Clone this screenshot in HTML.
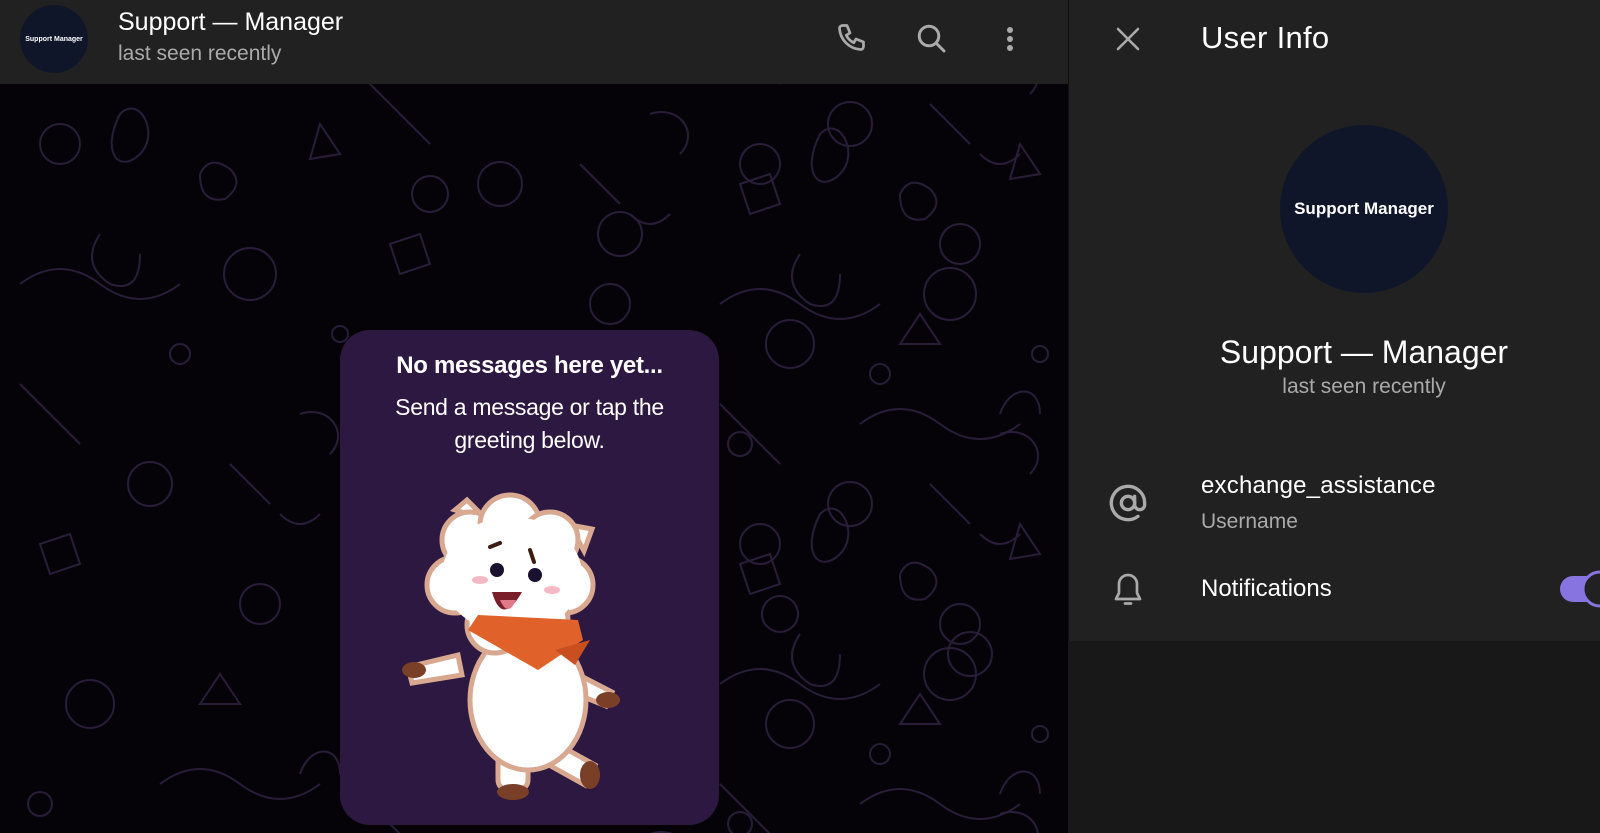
<!DOCTYPE html>
<html><head><meta charset="utf-8"><style>
*{margin:0;padding:0;box-sizing:border-box}
html,body{width:1600px;height:833px;overflow:hidden}
body{background:#000;font-family:"Liberation Sans",Roboto,sans-serif;position:relative}
#w{position:absolute;left:0;top:0;width:1600px;height:833px;overflow:hidden}
.t{position:absolute;white-space:nowrap}
</style></head><body><div id="w">
<div style="position:absolute;left:0;top:84px;width:1068px;height:749px;background:#050308"></div>
<svg style="position:absolute;left:0;top:84px" width="1068" height="749" fill="none" stroke="#2a1d3a" stroke-width="2">
<g id="p">
<circle cx="60" cy="60" r="20"/><circle cx="250" cy="190" r="26"/><circle cx="150" cy="400" r="22"/><circle cx="430" cy="110" r="18"/><circle cx="620" cy="150" r="22"/><circle cx="260" cy="520" r="20"/><circle cx="90" cy="620" r="24"/>
<path d="M20 200 q40 -30 80 0 t80 0"/><path d="M20 300 l60 60"/><path d="M160 700 q40 -30 80 0 t80 0"/>
<path d="M120 30 c20 -20 40 20 20 40 s-40 0 -20 -40"/><path d="M320 40 l20 30 l-30 5z"/><path d="M200 90 q10 -20 30 -5 q15 15 -5 30 q-25 5 -25 -25"/>
<path d="M40 460 l30 -10 l10 30 l-30 10z"/><path d="M300 330 c30 -10 50 20 30 40"/><path d="M200 620 l20 -30 l20 30 z"/>
<circle cx="180" cy="270" r="10"/><circle cx="340" cy="250" r="8"/><circle cx="40" cy="720" r="12"/><path d="M280 430 q20 20 40 0"/>
<path d="M100 150 q-20 30 10 50 q30 10 30 -30"/><path d="M230 380 l40 40"/><path d="M300 690 c10 -30 40 -30 40 0"/>
</g>
<use href="#p" x="700" y="20"/><use href="#p" x="350" y="-300"/><use href="#p" x="700" y="-360"/><use href="#p" x="700" y="400"/><use href="#p" x="350" y="420"/>
</svg>
<div style="position:absolute;left:0;top:0;width:1068px;height:84px;background:#212121"></div>
<div style="position:absolute;left:20px;top:5px;width:68px;height:68px;border-radius:50%;background:#0f1629;color:#fff;font-size:7px;font-weight:bold;display:flex;align-items:center;justify-content:center">Support Manager</div>
<div class="t" style="left:118px;top:8px;font-size:25px;color:#fff">Support — Manager</div>
<div class="t" style="left:118px;top:42px;font-size:21px;color:#aaa">last seen recently</div>
<svg style="position:absolute;left:835px;top:21px" width="36" height="36" viewBox="0 0 24 24" fill="none" stroke="#aaa" stroke-width="1.8" stroke-linecap="round" stroke-linejoin="round"><path d="M5 3h3l2 5-2.5 1.5a11 11 0 0 0 5 5L14 12l5 2v3a2 2 0 0 1-2 2A15 15 0 0 1 3 5a2 2 0 0 1 2-2"/></svg>
<svg style="position:absolute;left:914px;top:21px" width="36" height="36" viewBox="0 0 24 24" fill="none" stroke="#aaa" stroke-width="2" stroke-linecap="round"><circle cx="10" cy="10" r="6.5"/><path d="M15 15l5 5"/></svg>
<svg style="position:absolute;left:1000px;top:21px" width="20" height="36" viewBox="0 0 20 36" fill="#aaa"><circle cx="10" cy="9" r="3"/><circle cx="10" cy="18" r="3"/><circle cx="10" cy="27" r="3"/></svg>
<div style="position:absolute;left:340px;top:330px;width:379px;height:495px;border-radius:30px;background:#2c1840"></div>
<div class="t" style="left:340px;width:379px;text-align:center;top:352px;font-size:24px;font-weight:bold;color:#fff;letter-spacing:-0.3px">No messages here yet...</div>
<div class="t" style="left:340px;width:379px;text-align:center;top:391px;font-size:23px;line-height:33px;color:#fff;white-space:normal;letter-spacing:-0.3px">Send a message or tap the<br>greeting below.</div>
<svg style="position:absolute;left:400px;top:490px" width="230" height="310" viewBox="0 0 230 310">
<g stroke="#d8a890" stroke-width="5">
<path d="M58 165 l-50 12 l4 16 l50 -8z" fill="#fff"/>
<path d="M150 170 l62 32 l-6 14 l-62 -25z" fill="#fff"/>
<rect x="98" y="260" width="30" height="40" rx="10" fill="#fff"/>
<path d="M150 250 l45 25 l-10 20 l-45 -25z" fill="#fff"/>
<ellipse cx="128" cy="210" rx="58" ry="70" fill="#fff"/>
<path d="M55 20 l12 -10 l20 20z M170 35 l22 4 l-8 22z" fill="#fff"/>
<circle cx="70" cy="50" r="28" fill="#fff"/><circle cx="110" cy="35" r="30" fill="#fff"/><circle cx="150" cy="50" r="28" fill="#fff"/>
<circle cx="165" cy="95" r="28" fill="#fff"/><circle cx="140" cy="130" r="28" fill="#fff"/><circle cx="95" cy="135" r="28" fill="#fff"/>
<circle cx="55" cy="95" r="28" fill="#fff"/>
</g>
<ellipse cx="112" cy="85" rx="70" ry="58" fill="#fff"/>
<path d="M68 140 l70 40 l45 -30 l-5 -20 l-100 -5z" fill="#e0622a"/>
<path d="M190 150 l-15 25 l-20 -15z" fill="#c94f1f"/>
<ellipse cx="14" cy="180" rx="12" ry="8" fill="#7a4027"/><ellipse cx="208" cy="210" rx="12" ry="8" fill="#7a4027"/>
<ellipse cx="113" cy="302" rx="16" ry="8" fill="#7a4027"/><ellipse cx="190" cy="285" rx="10" ry="14" fill="#7a4027"/>
<circle cx="97" cy="80" r="7" fill="#1a1030"/><circle cx="135" cy="85" r="7" fill="#1a1030"/>
<path d="M92 102 q10 35 30 0 z" fill="#7a1e2a"/><path d="M100 110 q8 18 16 0z" fill="#e07a8a"/>
<ellipse cx="80" cy="90" rx="8" ry="4" fill="#f4b8c4"/><ellipse cx="152" cy="100" rx="8" ry="4" fill="#f4b8c4"/>
<path d="M90 57 l10 -4 M130 60 l4 12" stroke="#3a1d10" stroke-width="4" stroke-linecap="round"/>
</svg>
<div style="position:absolute;left:1068px;top:0;width:532px;height:641px;background:#212121;border-left:1px solid #0e0e0e"></div>
<div style="position:absolute;left:1068px;top:641px;width:532px;height:192px;background:#181818"></div>
<svg style="position:absolute;left:1114px;top:25px" width="28" height="28" viewBox="0 0 28 28" stroke="#aaa" stroke-width="2.6" stroke-linecap="round"><path d="M4 4l20 20M24 4L4 24"/></svg>
<div class="t" style="left:1201px;top:20px;font-size:31px;color:#fff;letter-spacing:0.3px">User Info</div>
<div style="position:absolute;left:1280px;top:125px;width:168px;height:168px;border-radius:50%;background:#0f1629;color:#fff;font-size:17px;font-weight:bold;display:flex;align-items:center;justify-content:center">Support Manager</div>
<div class="t" style="left:1098px;width:532px;text-align:center;top:334px;font-size:32px;color:#fff">Support — Manager</div>
<div class="t" style="left:1098px;width:532px;text-align:center;top:375px;font-size:21px;color:#aaa">last seen recently</div>
<svg style="position:absolute;left:1108px;top:483px" width="40" height="40" viewBox="0 0 24 24" fill="none" stroke="#aaa" stroke-width="2" stroke-linecap="round"><circle cx="12" cy="12" r="4"/><path d="M16 8v5a3 3 0 0 0 6 0v-1a10 10 0 1 0-4 8"/></svg>
<div class="t" style="left:1201px;top:472px;font-size:24px;color:#fff;letter-spacing:0.2px">exchange_assistance</div>
<div class="t" style="left:1201px;top:510px;font-size:21px;color:#aaa">Username</div>
<svg style="position:absolute;left:1110px;top:570px" width="36" height="40" viewBox="0 0 24 26" fill="none" stroke="#aaa" stroke-width="1.8" stroke-linejoin="round"><path d="M12 3a6 6 0 0 0-6 6v6l-2 4h16l-2-4V9a6 6 0 0 0-6-6z"/><path d="M10 22h4" stroke-linecap="round"/></svg>
<div class="t" style="left:1201px;top:575px;font-size:24px;color:#fff">Notifications</div>
<svg style="position:absolute;left:1558px;top:570px" width="42" height="40" viewBox="0 0 42 40"><rect x="2" y="6" width="60" height="26" rx="13" fill="#8774e1"/><circle cx="42" cy="19" r="17" fill="#212121" stroke="#8774e1" stroke-width="3"/></svg>
</div></body></html>
